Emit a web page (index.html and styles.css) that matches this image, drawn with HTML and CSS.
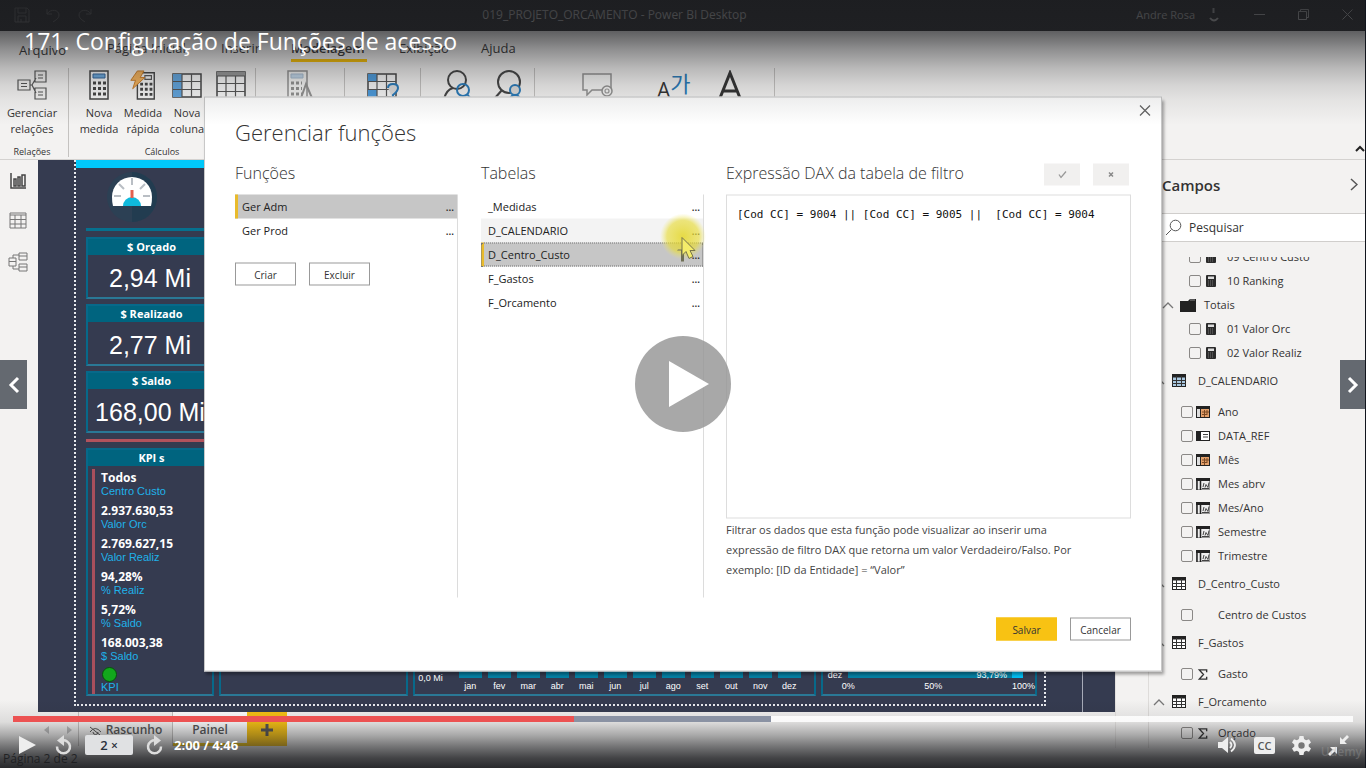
FILE: index.html
```html
<!DOCTYPE html>
<html lang="pt-BR">
<head>
<meta charset="utf-8">
<title>171. Configuração de Funções de acesso</title>
<link rel="stylesheet" href="styles.css">
</head>
<body>
<svg class="defs" aria-hidden="true">
  <symbol id="i-calc" viewBox="0 0 10 12"><rect width="10" height="12" rx="1" fill="#2b2b2b"/><rect x="2" y="1.5" width="6" height="2.5" fill="#ddd"/><path d="M2 6h6M2 8h6M2 10h6" stroke="#777" stroke-dasharray="1 1"/></symbol>
  <symbol id="i-table" viewBox="0 0 14 13"><rect x=".5" y=".5" width="13" height="12" fill="#fff" stroke="#222"/><path d="M0 2h14" stroke="#222" stroke-width="3"/><path d="M0 6.5h14M0 9.5h14M4.5 2v11M9.5 2v11" stroke="#333" fill="none"/></symbol>
  <symbol id="i-tableblue" viewBox="0 0 14 13"><rect x=".5" y=".5" width="13" height="12" fill="#a9c8e0" stroke="#222"/><path d="M0 2h14" stroke="#222" stroke-width="3"/><path d="M0 6.5h14M0 9.5h14M4.5 2v11M9.5 2v11" stroke="#333" fill="none"/></symbol>
  <symbol id="i-cal" viewBox="0 0 14 12"><rect x=".5" y=".5" width="13" height="11" fill="#e3a06a" stroke="#222"/><path d="M0 1.5h14" stroke="#222" stroke-width="3"/><rect x="1" y="3" width="3" height="8" fill="#ddd"/><path d="M4.5 3v9" stroke="#222"/><path d="M6 6h7M6 8.500h5M8.500 4v7M11 4v5" stroke="#7b4a25" fill="none"/></symbol>
  <symbol id="i-txt" viewBox="0 0 14 12"><rect x=".5" y=".5" width="13" height="11" fill="#eee" stroke="#999"/><path d="M0 1.500h14" stroke="#222" stroke-width="3"/><path d="M1 3v9M4.500 3v9" stroke="#222" stroke-width="1.500"/><path d="M6 10.500h7M7 9l1-4M9 9.500l1-3 2 3 1-5" stroke="#444" fill="none"/></symbol>
  <symbol id="i-key" viewBox="0 0 14 10"><rect x=".5" y=".5" width="13" height="9" fill="#fff" stroke="#222"/><path d="M0 0h5v10H0z" fill="#222"/><path d="M7 3.500h5M7 6h5" stroke="#444"/></symbol>
  <symbol id="i-sigma" viewBox="0 0 10 12"><path d="M9 3.500V1H1l4.500 5L1 11h8V8.500" fill="none" stroke="#333" stroke-width="1.500"/></symbol>
  <symbol id="i-up" viewBox="0 0 12 8"><path d="M1 7l5-5 5 5" fill="none" stroke="#777" stroke-width="1.300"/></symbol>
</svg>

<div class="player">
<div class="app">
  <header class="titlebar">
    <div class="quick">
      <svg width="16" height="16" viewBox="0 0 16 16"><path d="M1 1h12l2 2v12H1zM4 1v5h8V1M4 15V9h8v6M7 12v3"/></svg>
      <svg width="15" height="16" viewBox="0 0 15 16"><path d="M1 2v5h5M1 7c4-6 12-4 12 1 0 4-5 6-6 7"/></svg>
      <svg width="15" height="16" viewBox="0 0 15 16"><path d="M14 2v5H9M14 7C10 1 2 3 2 8c0 4 5 6 6 7"/></svg>
    </div>
    <span class="doc">019_PROJETO_ORCAMENTO - Power BI Desktop</span>
    <div class="window">
      <span class="user">Andre Rosa</span>
      <svg width="15" height="15" viewBox="0 0 15 15"><path d="M7.500 1v5" stroke="#d8bfae" stroke-width="2"/><path d="M4 11q4 5 8 0" stroke="#d8bfae" stroke-width="2"/></svg>
      <svg class="w-min" width="11" height="11" viewBox="0 0 11 11"><path d="M0 5.500h11"/></svg>
      <svg class="w-max" width="11" height="11" viewBox="0 0 11 11"><path d="M.5 2.500h8v8h-8zM2.500 2.500v-2h8v8h-2"/></svg>
      <svg class="w-x" width="11" height="11" viewBox="0 0 11 11"><path d="M.5.5l10 10M10.500.5l-10 10"/></svg>
    </div>
  </header>

  <nav class="menu">
    <span class="file">Arquivo</span><span class="m-home">Página Inicial</span><span class="m-ins">Inserir</span><span class="m-mod active">Modelagem</span><span class="m-view">Exibição</span><span>Ajuda</span>
  </nav>

  <div class="ribbon">
    <section class="group g-rel">
      <div class="tools">
        <button class="tool"><svg width="30" height="30" viewBox="0 0 30 30"><path d="M1 10h12v10H1zM18 1h11v11H18zM18 18h11v11H18zM13 15h2l4-7M15 15l4 8" class="ln"/><path d="M4 13.500h6M4 16.500h6M21 5h5M21 8h5M21 22h5M21 25h5" class="ln"/></svg>Gerenciar relações</button>
      </div><h6>Relações</h6>
    </section>
    <section class="group g-calc">
      <div class="tools">
        <button class="tool"><svg width="20" height="30" viewBox="0 0 20 30"><path d="M1 1h18v28H1z" class="box"/><path d="M4 4h12v4H4z" fill="#6da9dc" stroke="#35659a"/><path d="M4 13h13M4 18.500h13M4 24h13" class="keys"/></svg>Nova medida</button>
        <button class="tool"><svg width="28" height="32" viewBox="0 0 28 32"><path d="M8 3h18v28H8z" class="box"/><path d="M16 6h7v4h-7z" class="ln"/><path d="M11 15h13M11 20.500h13M11 26h13" class="keys"/><path d="M8 1h7l-4 7h5L3 20l3-9H1z" fill="#f5b35c" stroke="#c77a24"/></svg>Medida rápida</button>
        <button class="tool"><svg width="30" height="30" viewBox="0 0 30 30"><path d="M1 4h28v23H1z" class="box"/><path d="M1 4h9v23H1z" fill="#62a5dd"/><path d="M10 4v23M19.500 4v23M1 11.500h28M1 19.500h28" class="ln"/></svg>Nova coluna</button>
        <button class="tool" aria-label="Nova tabela"><svg width="30" height="30" viewBox="0 0 30 30"><path d="M1 2h28v27H1z" class="box"/><path d="M1 2h28v4H1z" fill="#999"/><path d="M10 6v23M19.500 6v23M1 6h28M1 13.500h28M1 21.500h28" class="ln"/></svg></button>
      </div><h6>Cálculos</h6>
    </section>
    <section class="group g-param"><div class="tools"><button class="tool faded"><svg width="26" height="30" viewBox="0 0 26 30"><path d="M1 1h19v28H1z" class="box"/><path d="M4 4h12v4H4z" fill="#9cc3e6" stroke="#6d93b8"/><path d="M4 13h11M4 18.500h11M4 24h11" class="keys"/><path d="M14 28l5-14 6 14" class="ln thick"/></svg></button></div></section>
    <section class="group g-sec"><div class="tools"><button class="tool"><svg width="32" height="30" viewBox="0 0 32 30"><path d="M1 4h28v23H1z" class="box"/><path d="M1 4h9v7H1zM1 19h9v8H1z" fill="#4c9bdc"/><path d="M10 4v23M19.500 4v23M1 11.500h28M1 19.500h28" class="ln"/><path d="M21 18q0-4 5-4t5 4q0 3-5 7v5" fill="#ddd" stroke="#2a7ab8" stroke-width="2"/></svg></button></div></section>
    <section class="group g-roles"><div class="tools">
      <button class="tool"><svg width="30" height="30" viewBox="0 0 30 30"><circle cx="15" cy="10" r="9" class="ln big"/><path d="M2 29q2-9 9-11" class="ln big"/><circle cx="21" cy="20" r="6" class="blue"/><path d="M25 24l4 5" class="blue"/></svg></button>
      <button class="tool"><svg width="30" height="30" viewBox="0 0 30 30"><circle cx="16" cy="12" r="11" class="ln big"/><path d="M9 20l-7 8" class="ln big"/><circle cx="22" cy="20" r="5" class="blue halo"/><path d="M16 30q2-5 6-5t6 5" class="blue halo"/></svg></button>
    </div></section>
    <section class="group g-qa"><div class="tools">
      <button class="tool faded"><svg width="32" height="30" viewBox="0 0 32 30"><path d="M1 4h28v16H10l-5 5v-5H1z" class="box"/><circle cx="25" cy="21" r="5" class="box"/><circle cx="25" cy="21" r="2" class="ln"/></svg></button>
      <button class="tool lang"><span class="la">A</span><span class="lk" lang="ko">가</span></button>
      <button class="tool syn"><svg width="24" height="30" viewBox="0 0 24 30"><path d="M2 28L12 3l10 25M5 21h14" fill="none" stroke="#333" stroke-width="3"/></svg></button>
    </div></section>
    <svg class="collapse" width="10" height="7" viewBox="0 0 10 7"><path d="M1 6l4-4 4 4" fill="none" stroke="#222" stroke-width="2"/></svg>
  </div>

  <main class="main">
    <nav class="rail">
      <svg width="16" height="16" viewBox="0 0 16 16"><path d="M1 0v15h15M4 6h2v7H4zM8 4h2v9H8zM12 2h3v11h-3z" class="dark"/></svg>
      <svg width="18" height="17" viewBox="0 0 18 17"><path d="M1 1h16v15H1zM1 3h16M1 7.500h16M1 12h16M6 3v13M12 3v13"/></svg>
      <svg width="20" height="20" viewBox="0 0 20 20"><path d="M1 6h7v8H1zM1 9.500h7M11 1h8v7h-8zM11 4h8M11 12h8v7h-8zM11 15h8M5 6V3h6M5 14v3h6"/></svg>
    </nav>

    <div class="center">
      <div class="canvas">
        <div class="report">
          <div class="banner"></div>
          <div class="visuals">
            <div class="kpis">
              <svg class="gauge" width="50" height="52" viewBox="0 0 50 52"><circle cx="25" cy="26" r="25" fill="#2c4054"/><path d="M25 1a25 25 0 0 1 0 50z" fill="#223c50"/><path d="M6 35q-1-3-1-9a20 20 0 0 1 40 0q0 6-1 9z" fill="#fff"/><path d="M16 35a9 9 0 0 1 18 0z" fill="#0fb9dc"/><path d="M25 7v7M12 13l5 5M38 13l-5 5M7 25h7M43 25h-7" stroke="#b9bec4" stroke-width="2"/><path d="M25 19v8" stroke="#e3604f" stroke-width="3"/></svg>
              <div class="rule teal"></div>
              <article class="card"><h5>$ Orçado</h5><p>2,94 Mi</p></article>
              <article class="card"><h5>$ Realizado</h5><p>2,77 Mi</p></article>
              <article class="card"><h5>$ Saldo</h5><p>168,00 Mi</p></article>
              <div class="rule red"></div>
              <article class="card list"><h5>KPI s</h5>
                <dl>
                  <div><dd>Todos</dd><dt>Centro Custo</dt></div>
                  <div><dd>2.937.630,53</dd><dt>Valor Orc</dt></div>
                  <div><dd>2.769.627,15</dd><dt>Valor Realiz</dt></div>
                  <div><dd>94,28%</dd><dt>% Realiz</dt></div>
                  <div><dd>5,72%</dd><dt>% Saldo</dt></div>
                  <div><dd>168.003,38</dd><dt>$ Saldo</dt></div>
                  <div><dd><i class="dot"></i></dd><dt>KPI</dt></div>
                </dl>
              </article>
            </div>
            <div class="visual"></div>
            <div class="visual months">
              <span class="axis">0,0 Mi</span>
              <ol><li>jan</li><li>fev</li><li>mar</li><li>abr</li><li>mai</li><li>jun</li><li>jul</li><li>ago</li><li>set</li><li>out</li><li>nov</li><li>dez</li></ol>
            </div>
            <div class="visual share">
              <div class="sharebar"><span class="cat">dez</span><div class="track"><div class="done" style="width:93.79%">93,79%</div></div></div>
              <div class="scale"><span>0%</span><span>50%</span><span>100%</span></div>
            </div>
          </div>
        </div>
        <div class="gutter"></div>
      </div>
      <div class="pages">
        <svg class="arrows" width="40" height="10" viewBox="0 0 40 10"><path d="M11 1v8L6 5zM29 1v8l5-4z" fill="#bbb"/></svg>
        <button class="page"><svg width="13" height="9" viewBox="0 0 13 9"><path d="M1 6q5-7 11 0M1 1l10 8M4 6a2.500 2.500 0 0 0 5 0" fill="none" stroke="#555"/></svg>Rascunho</button>
        <button class="page current">Painel</button>
        <button class="addpage" aria-label="Nova página"><svg width="12" height="12" viewBox="0 0 12 12"><path d="M6 0v12M0 6h12" stroke="#555" stroke-width="3"/></svg></button>
      </div>
    </div>

    <div class="filters"></div>

    <aside class="fields">
      <header><h2>Campos</h2><svg width="8" height="13" viewBox="0 0 8 13"><path d="M1 1l6 5.500L1 12" fill="none" stroke="#555" stroke-width="1.500"/></svg></header>
      <label class="search"><svg width="17" height="17" viewBox="0 0 17 17"><circle cx="10.500" cy="6.500" r="5.300" fill="none" stroke="#555"/><path d="M6.500 10.500L1 16" stroke="#555"/></svg><input type="text" placeholder="Pesquisar" aria-label="Pesquisar"></label>
      <div class="tree">
        <label class="leaf deep first"><input type="checkbox"><svg width="10" height="12"><use href="#i-calc"/></svg>09 Centro Custo</label>
        <label class="leaf deep"><input type="checkbox"><svg width="10" height="12"><use href="#i-calc"/></svg>10 Ranking</label>
        <div class="folder"><svg width="12" height="8"><use href="#i-up"/></svg><svg width="16" height="13" viewBox="0 0 16 13"><path d="M0 2h8l2-2h6v13H0z" fill="#222"/><path d="M10 1h5" stroke="#888"/></svg>Totais</div>
        <label class="leaf deep"><input type="checkbox"><svg width="10" height="12"><use href="#i-calc"/></svg>01 Valor Orc</label>
        <label class="leaf deep"><input type="checkbox"><svg width="10" height="12"><use href="#i-calc"/></svg>02 Valor Realiz</label>
        <div class="tbl"><svg width="12" height="8"><use href="#i-up"/></svg><svg width="14" height="13"><use href="#i-tableblue"/></svg>D_CALENDARIO</div>
        <label class="leaf"><input type="checkbox"><svg width="14" height="12"><use href="#i-cal"/></svg>Ano</label>
        <label class="leaf"><input type="checkbox"><svg width="14" height="10"><use href="#i-key"/></svg>DATA_REF</label>
        <label class="leaf"><input type="checkbox"><svg width="14" height="12"><use href="#i-cal"/></svg>Mês</label>
        <label class="leaf"><input type="checkbox"><svg width="14" height="12"><use href="#i-txt"/></svg>Mes abrv</label>
        <label class="leaf"><input type="checkbox"><svg width="14" height="12"><use href="#i-txt"/></svg>Mes/Ano</label>
        <label class="leaf"><input type="checkbox"><svg width="14" height="12"><use href="#i-txt"/></svg>Semestre</label>
        <label class="leaf"><input type="checkbox"><svg width="14" height="12"><use href="#i-txt"/></svg>Trimestre</label>
        <div class="tbl"><svg width="12" height="8"><use href="#i-up"/></svg><svg width="14" height="13"><use href="#i-table"/></svg>D_Centro_Custo</div>
        <label class="leaf"><input type="checkbox"><svg width="14" height="12"></svg>Centro de Custos</label>
        <div class="tbl"><svg width="12" height="8"><use href="#i-up"/></svg><svg width="14" height="13"><use href="#i-table"/></svg>F_Gastos</div>
        <label class="leaf"><input type="checkbox"><svg width="14" height="11"><use href="#i-sigma"/></svg>Gasto</label>
        <div class="tbl"><svg width="12" height="8"><use href="#i-up"/></svg><svg width="14" height="13"><use href="#i-table"/></svg>F_Orcamento</div>
        <label class="leaf"><input type="checkbox"><svg width="14" height="11"><use href="#i-sigma"/></svg>Orçado</label>
      </div>
    </aside>
  </main>
  <footer class="status">Página 2 de 2</footer>
</div>

<div class="modal" role="dialog" aria-labelledby="dlg">
  <button class="close" aria-label="Fechar"><svg width="12" height="12" viewBox="0 0 12 12"><path d="M1 1l10 10M11 1L1 11" stroke="#666" stroke-width="1.300"/></svg></button>
  <h1 id="dlg">Gerenciar funções</h1>
  <div class="cols">
    <section class="col">
      <h3>Funções</h3>
      <div class="pane">
        <ul><li class="sel">Ger Adm<b>...</b></li><li>Ger Prod<b>...</b></li></ul>
        <div class="row"><button class="btn">Criar</button><button class="btn">Excluir</button></div>
      </div>
    </section>
    <section class="col">
      <h3>Tabelas</h3>
      <div class="pane">
        <ul><li>_Medidas<b>...</b></li><li class="hover">D_CALENDARIO<b>...</b></li><li class="sel focus">D_Centro_Custo<b>...</b></li><li>F_Gastos<b>...</b></li><li>F_Orcamento<b>...</b></li></ul>
        <svg class="pointer" width="46" height="46" viewBox="0 0 46 46"><defs><radialGradient id="halo"><stop offset="0" stop-color="#e3d41a" stop-opacity=".8"/><stop offset=".7" stop-color="#e8dc3a" stop-opacity=".65"/><stop offset="1" stop-color="#efe870" stop-opacity="0"/></radialGradient></defs><circle cx="23" cy="23" r="23" fill="url(#halo)"/><path d="M18 36h8v-5h-2v17h-3V37h-4z" fill="#6f6f55"/><path d="M22 24v18l4-4 3 7 4-2-3-6h5z" fill="#f4ec6a" stroke="#77744c"/></svg>
      </div>
    </section>
    <section class="expr">
      <div class="exprhead"><h3><label for="dax">Expressão DAX da tabela de filtro</label></h3>
        <button class="mini" aria-label="Aceitar"><svg width="9" height="8" viewBox="0 0 9 8"><path d="M1 4l2 3 5-6" fill="none" stroke="#999" stroke-width="1.300"/></svg></button>
        <button class="mini" aria-label="Descartar"><svg width="6" height="6" viewBox="0 0 6 6"><path d="M1 1l4 4M5 1L1 5" stroke="#888" stroke-width="1.500"/></svg></button>
      </div>
      <textarea id="dax" spellcheck="false">[Cod CC] = 9004 || [Cod CC] = 9005 ||  [Cod CC] = 9004</textarea>
      <p>Filtrar os dados que esta função pode visualizar ao inserir uma expressão de filtro DAX que retorna um valor Verdadeiro/Falso. Por exemplo: [ID da Entidade] = “Valor”</p>
    </section>
  </div>
  <div class="actions"><button class="btn primary">Salvar</button><button class="btn">Cancelar</button></div>
</div>

<div class="shade top"></div>
<div class="shade bottom"></div>
<div class="edge"></div>
<div class="lesson">171. Configuração de Funções de acesso</div>
<button class="side prev" aria-label="Anterior"><svg width="12" height="18" viewBox="0 0 12 18"><path d="M10 2L3 9l7 7" fill="none" stroke="#fff" stroke-width="3"/></svg></button>
<button class="side next" aria-label="Próximo"><svg width="12" height="18" viewBox="0 0 12 18"><path d="M2 2l7 7-7 7" fill="none" stroke="#fff" stroke-width="3"/></svg></button>
<button class="bigplay" aria-label="Reproduzir"><svg width="40" height="46" viewBox="0 0 40 46"><path d="M0 0l40 23L0 46z" fill="#fff"/></svg></button>
<div class="controls">
  <input class="seek" type="range" min="0" max="286" value="120" aria-label="Progresso">
  <div class="bar">
    <button aria-label="Reproduzir"><svg width="17" height="18" viewBox="0 0 17 18"><path d="M0 0l17 9-17 9z" fill="#eee"/></svg></button>
    <button class="back" aria-label="Voltar"><svg width="18" height="20" viewBox="0 0 18 20"><path d="M7 5.500a6.500 6.500 0 1 1-5 6" fill="none" stroke="#ddd" stroke-width="2.500"/><path d="M9 0v11L2 5.500z" fill="#ddd"/></svg></button>
    <button class="speed">2 <small>×</small></button>
    <button class="fwd" aria-label="Avançar"><svg width="18" height="20" viewBox="0 0 18 20"><path d="M11 5.500a6.500 6.500 0 1 0 5 6" fill="none" stroke="#ddd" stroke-width="2.500"/><path d="M9 0v11l7-5.500z" fill="#ddd"/></svg></button>
    <span class="time">2:00 / 4:46</span>
    <span class="mark">Udemy</span>
    <button class="vol" aria-label="Volume"><svg width="20" height="16" viewBox="0 0 20 16"><path d="M0 5h4l6-5v16l-6-5H0z" fill="#eee"/><path d="M12 5q3 3 0 6M13 1.500q8 6.500 0 13" fill="none" stroke="#eee" stroke-width="1.800"/></svg></button>
    <button class="cc">CC</button>
    <button class="gear" aria-label="Configurações"><svg width="21" height="21" viewBox="0 0 21 21"><path d="M8.500 1h4l.6 3 2 1.200 2.900-1 2 3.400-2.300 2v1.800l2.300 2-2 3.400-2.900-1-2 1.200-.6 3h-4l-.6-3-2-1.200-2.900 1-2-3.400 2.300-2V9.600L1 7.600l2-3.400 2.900 1 2-1.200z" fill="#eee"/><circle cx="10.500" cy="10.500" r="3.200" fill="#777"/></svg></button>
    <button aria-label="Sair da tela cheia"><svg width="21" height="21" viewBox="0 0 21 21"><path d="M12 2v7h7l-2.500-2.500L21 2l-2-2-4.500 4.500zM9 19v-7H2l2.500 2.500L0 19l2 2 4.500-4.500z" fill="#eee"/></svg></button>
  </div>
</div>
</div>
</body>
</html>
```

FILE: styles.css
```css
* { box-sizing: border-box; }
body { margin: 0; background: #1c1d1f; color: #333; font: 12px/16px "Open Sans", "Noto Sans", sans-serif; }
h1, h2, h3, h5, h6, p, ul, ol, dl, dd { margin: 0; padding: 0; font-weight: 400; }
ul, ol { list-style: none; }
button { border: 0; padding: 0; background: none; font: inherit; color: inherit; }
svg { display: block; flex: none; }
.defs { position: absolute; width: 0; height: 0; }
.player { position: relative; height: 100vh; min-height: 768px; overflow: hidden; }
.app { display: flex; flex-direction: column; height: 100%; background: #f3f2f1; }

/* window title */
.titlebar { display: flex; justify-content: space-between; align-items: center; height: 31px; padding: 0 13px 2px 14px; background: #252629; color: #c8c8c8; }
.titlebar svg path { fill: none; stroke: currentColor; }
.quick, .window { display: flex; align-items: center; flex: 1 1 0; }
.quick { gap: 16px; opacity: .4; }
.doc { padding-right: 138px; font-size: 12px; }
.window { justify-content: flex-end; font-size: 11px; }
.user { margin-right: 11px; }
.w-min { margin-left: 33px; }
.w-max, .w-x { margin-left: 33px; }

/* ribbon */
.menu { display: flex; height: 32px; padding: 6px 0 0 19px; font-size: 13px; line-height: 22px; }
.menu .file { width: 88px; padding-top: 2px; }
.m-home { width: 114px; }
.m-ins { width: 70px; }
.m-view { width: 82px; }
.menu .m-mod { margin-right: 32px; width: 76px; height: 25px; border-bottom: 3px solid #ffc400; font-weight: 600; white-space: nowrap; }
.ribbon { display: flex; align-items: flex-start; height: 97px; padding-top: 5px; border-bottom: 1px solid #d4d2d0; }
.group { display: flex; flex-direction: column; justify-content: space-between; height: 89px; border-right: 1px solid #c4c2c0; }
.tools { display: flex; justify-content: center; }
.tool { display: flex; flex-direction: column; align-items: center; gap: 3px; width: 44px; font-size: 11px; line-height: 16px; }
.tool svg { height: 34px; padding: 2px 0; }
.group h6 { font-size: 9px; line-height: 10px; text-align: center; }
.g-rel { width: 69px; padding-right: 4px; }
.g-rel .tool { width: 60px; }
.g-calc { width: 187px; }
.g-calc .tools { justify-content: flex-start; padding-left: 8px; }
.g-param { width: 89px; }
.g-sec { width: 76px; }
.g-roles { width: 114px; }
.g-roles .tools { gap: 7px; padding-left: 9px; }
.g-qa { width: 240px; }
.g-qa .tools { justify-content: flex-start; padding-left: 41px; }
.g-qa .lang { flex-direction: row; gap: 0; margin-left: 33px; width: 44px; align-items: flex-start; }
.g-qa .syn { margin-left: 11px; }
.la { padding: 14px 0 0 4px; font-size: 21px; }
.lk { padding-top: 3px; color: #2a7ab8; font: 22px/22px "Noto Sans CJK KR", sans-serif; }
.faded { opacity: .55; }
.box { fill: #f6f6f6; stroke: #444; stroke-width: 1.5; }
.ln { fill: none; stroke: #555; stroke-width: 1.2; }
.thick, .big { stroke: #444; stroke-width: 2; }
.blue { fill: none; stroke: #2a7ab8; stroke-width: 2; }
.halo { fill: #dcdbda; }
.keys { fill: none; stroke: #444; stroke-width: 3; stroke-dasharray: 3 2; }
.collapse { margin: 77px 1px 0 auto; }

/* workspace */
.main { display: flex; flex: 1; min-height: 0; }
.rail { display: flex; flex-direction: column; align-items: center; gap: 23px; width: 38px; padding: 13px 2px 0 0; }
.rail path { fill: none; stroke: #777; }
.rail .dark { stroke: #444; stroke-width: 1.5; }
.center { display: flex; flex-direction: column; flex: 1; min-width: 0; }
.canvas { display: flex; flex: 1; min-height: 0; background: #353b50; }
.report { display: flex; flex-direction: column; flex: 1; margin: 0 36px 6px; border: 2px dotted #e8eaee; border-top: 0; }
.banner { height: 9px; background: #00c8fa; }
.visuals { display: grid; grid-template-columns: 128px 189fr 402fr 216fr; gap: 5px; flex: 1; padding: 0 7px 8px 10px; }
.kpis { display: flex; flex-direction: column; gap: 5px; }
.gauge { margin: 3px 0 0 21px; }
.rule { flex: none; height: 3px; }
.rule.teal { background: #06708e; margin-bottom: 1px; }
.rule.red { background: #b3525c; margin: 1px 0; }
.card, .visual { border: 2px solid #07698a; border-bottom-color: #2a7896; }
.card { flex: none; }
.card h5 { padding-left: 3px; background: #00647f; color: #fff; font-size: 11px; line-height: 16px; font-weight: 700; text-align: center; }
.card p { height: 42px; color: #fff; font: 25px/46px "Liberation Sans", sans-serif; text-align: center; white-space: nowrap; }
.kpis .list { flex: 1; min-height: 0; }
.list dl { margin: 3px 0 0 4px; padding: 0 0 0 6px; border-left: 3px solid #a84f5c; }
.list dl div { height: 33px; }
.list dl div:last-child { height: 27px; }
.list dd { color: #fff; font-size: 12px; line-height: 17px; font-weight: 700; }
.list dt { color: #1fb2ea; font: 11px/11px "Liberation Sans", sans-serif; }
.dot { display: block; width: 15px; height: 15px; margin-left: 1px; border: 1px solid #07510d; border-radius: 50%; background: #12a81c; }
.visual { display: flex; color: #fff; font: 9px/14px "Liberation Sans", sans-serif; }
.months { align-items: flex-end; justify-content: space-between; padding: 0 10px 1px 3px; }
.axis { padding-bottom: 8px; }
.months ol { display: grid; grid-template-columns: repeat(12, 1fr); flex: 0 0 348px; }
.months li { text-align: center; }
.months li::before { content: ""; display: block; width: 23px; height: 60px; margin: 0 auto 1px; background: #047fa3; }
.share { flex-direction: column; justify-content: flex-end; padding: 0 0 1px 5px; }
.sharebar { display: flex; height: 18px; margin-right: 12px; padding-bottom: 1px; }
.cat { flex: none; width: 20px; padding-top: 7px; }
.track { flex: 1; background: #00bdf2; }
.done { height: 100%; padding: 7px 5px 0 0; background: #047fa3; text-align: right; }
.scale { display: flex; justify-content: space-between; padding-left: 14px; }
.gutter { width: 33px; border-left: 1px solid #a7abb8; }
.pages { display: flex; align-items: flex-start; height: 36px; }
.arrows { margin-top: 13px; }
.page { display: flex; align-items: center; justify-content: center; gap: 4px; width: 95px; height: 34px; padding-top: 2px; border: solid #c4c2c0; border-width: 0 1px; color: #555; font-size: 12px; font-weight: 600; }
.page.current { width: 74px; padding-top: 5px; border: 0; border-bottom: 3px solid #f2c811; background: #fff; }
.addpage { display: flex; align-items: center; justify-content: center; width: 40px; height: 34px; padding-top: 2px; background: #f8c213; }
.filters { width: 33px; border-left: 1px solid #e3e1df; }
.status { height: 20px; padding: 3px; font-size: 12px; line-height: 16px; }

/* fields pane */
.fields { display: flex; flex-direction: column; width: 218px; border-left: 1px solid #dedcda; }
.fields header { display: flex; align-items: center; justify-content: space-between; height: 53px; padding: 0 8px 4px 13px; }
.fields h2 { font-size: 15px; font-weight: 600; }
.search { display: flex; align-items: center; gap: 7px; height: 29px; flex: none; padding-left: 16px; border: solid #d0cecc; border-width: 1px 0; background: #fff; }
.search input { width: 100%; min-width: 0; border: 0; padding: 0; background: none; font: inherit; }
.search input::placeholder { color: #333; opacity: 1; }
.tree { flex: 1; min-height: 0; margin-top: 15px; overflow: hidden; font-size: 11px; white-space: nowrap; }
.leaf, .folder { display: flex; align-items: center; height: 24px; padding-left: 32px; }
.leaf svg { margin: 0 8px 0 3px; }
.deep { padding-left: 40px; }
.deep svg { margin: 0 11px 0 5px; }
.first { margin-top: -12px; }
.leaf input { appearance: none; width: 12px; height: 12px; margin: 0; border: 1px solid #8a8886; border-radius: 2px; flex: none; }
.folder { gap: 6px; padding-left: 13px; }
.folder svg + svg { margin-right: 2px; }
.tbl { display: flex; align-items: center; gap: 7px; height: 35px; padding: 0 0 4px 4px; }
.tbl svg + svg { margin-right: 5px; }

/* dialog */
.modal { position: absolute; top: 50%; left: 50%; transform: translate(-50%, -50%); width: 958px; max-width: 94vw; padding: 20px 30px 30px; border: 1px solid #c8c8c8; background: #fff; box-shadow: 2px 3px 3px rgba(0, 0, 0, .35); }
.close { position: absolute; top: 7px; right: 10px; }
.modal h1 { font-size: 22px; line-height: 28px; font-weight: 300; color: #333; }
.modal h3 { font-size: 16px; line-height: 20px; font-weight: 300; color: #333; white-space: nowrap; }
.cols { display: flex; gap: 23px; margin-top: 17px; }
.col { width: 223px; display: flex; flex-direction: column; }
.col h3, .exprhead { height: 32px; }
.pane { position: relative; flex: 1; min-height: 403px; border-right: 1px solid #dcdcdc; }
.pane li { display: flex; justify-content: space-between; height: 24px; padding: 0 3px 0 7px; line-height: 24px; font-size: 11px; color: #222; }
.pane b { font-size: 10px; font-weight: 600; }
.pane .sel { padding-left: 4px; border-left: 3px solid #e9bb2c; background: #c6c6c6; }
.pane .hover { background: #f3f3f3; }
.pane .focus { outline: 1px dotted #777; outline-offset: -1px; }
.row { display: flex; gap: 13px; margin-top: 20px; }
.btn { width: 61px; height: 23px; border: 1px solid #999; background: #fff; font-size: 10px; color: #333; }
.primary { border-color: #f8c213; background: #f8c213; }
.pointer { position: absolute; top: 19px; right: -3px; overflow: visible; }
.expr { flex: 1; min-width: 0; margin-left: -1px; }
.exprhead { display: flex; gap: 13px; }
.exprhead h3 { flex: 1; }
.mini { display: flex; align-items: center; justify-content: center; width: 36px; height: 22px; margin-top: 1px; background: #f1f0ef; }
.mini:last-child { margin-right: 2px; }
textarea { display: block; width: 100%; height: 324px; resize: none; padding: 10px; border: 1px solid #ddd; outline: 0; background: #fff; color: #111; font: 11px/18px "DejaVu Sans Mono", monospace; }
.expr p { margin-top: 1px; padding-right: 40px; font-size: 11px; line-height: 20px; color: #444; }
.actions { display: flex; justify-content: flex-end; gap: 13px; margin-top: 20px; }

/* player chrome */
.shade { position: absolute; left: 0; right: 0; pointer-events: none; }
.shade.top { top: 0; height: 125px; background: linear-gradient(rgba(28, 29, 32, .85), rgba(28, 29, 32, .68) 32px, rgba(28, 29, 32, .46) 50px, rgba(28, 29, 32, .27) 68px, rgba(28, 29, 32, .14) 85px, rgba(28, 29, 32, .07) 100px, rgba(28, 29, 32, 0)); }
.shade.bottom { bottom: 0; height: 68px; background: linear-gradient(rgba(28, 29, 32, 0), rgba(28, 29, 32, .1) 22px, rgba(28, 29, 32, .34) 35px, rgba(28, 29, 32, .58) 46px, rgba(28, 29, 32, .82) 58px, rgba(28, 29, 32, .94)); }
.edge { position: absolute; top: 0; right: 0; bottom: 0; width: 1px; background: #11151d; }
.lesson { position: absolute; top: 25px; left: 24px; color: #fff; font-size: 23px; line-height: 32px; }
.side { position: absolute; top: calc(50% - 24px); display: flex; align-items: center; justify-content: center; width: 27px; height: 49px; background: #646970; }
.prev { left: 0; }
.next { right: 1px; width: 25px; }
.bigplay { position: absolute; top: calc(50% - 48px); left: calc(50% - 48px); display: flex; align-items: center; justify-content: center; width: 96px; height: 96px; padding-left: 12px; border-radius: 50%; background: rgba(150, 150, 150, .83); }
.controls { position: absolute; left: 0; right: 0; bottom: 0; padding: 0 13px 10px; }
.seek { appearance: none; display: block; width: 100%; height: 6px; margin: 0; background: linear-gradient(90deg, #ec5252 0 41.9%, #8a92a3 41.9% 56.6%, rgba(255, 255, 255, .85) 56.6%); }
.seek::-webkit-slider-thumb { appearance: none; width: 0; height: 0; }
.bar { display: flex; align-items: center; height: 26px; margin-top: 10px; padding: 0 4px 0 6px; color: #fff; }
.back { margin-left: 19px; }
.speed { width: 48px; height: 20px; margin-left: 12px; border-radius: 2px; background: #e0e1e3; color: #29303b; font-size: 13px; font-weight: 600; line-height: 18px; }
.speed small { font-size: 12px; }
.fwd { margin-left: 12px; }
.time { margin-left: 11px; font-size: 13px; font-weight: 700; }
.mark { position: absolute; right: 4px; bottom: 8px; color: rgba(160, 160, 160, .35); font-size: 12px; font-weight: 600; }
.vol { margin-left: auto; }
.cc { width: 21px; height: 17px; margin: 0 16px; border-radius: 2px; background: #eee; color: #555; font-size: 11px; font-weight: 600; line-height: 17px; }
.gear { margin-right: 16px; }
```
